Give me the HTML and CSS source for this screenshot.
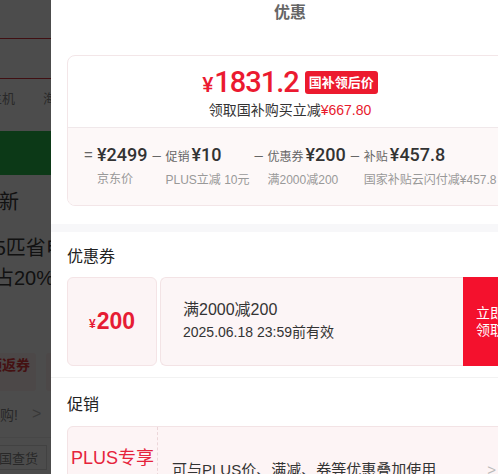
FILE: index.html
```html
<!DOCTYPE html>
<html lang="zh-CN">

<head>
    <meta charset="UTF-8">
    <meta name="viewport" content="width=device-width, initial-scale=1.0">
    <title>优惠</title>
    <link rel="stylesheet" href="styles.css">
</head>

<body>
    <!-- product page behind the sheet -->
    <div class="page">
        <div class="page-top"></div>
        <div class="page-search"></div>
        <div class="page-tabs">
            <span class="tab tab-cut">主机</span>
            <span class="tab">海</span>
        </div>
        <div class="page-banner"></div>
        <div class="page-title"><span class="cut-new">以旧换新</span></div>
        <div class="page-name">
            <div class="name-line cut-a">1.5匹省电</div>
            <div class="name-line cut-b">新能效占20%</div>
        </div>
        <div class="page-tags">
            <span class="tag tag-cut">领返券</span>
            <span class="tag">满</span>
        </div>
        <div class="page-row">
            <span class="row-text">抢购!</span>
            <span class="row-arrow">&gt;</span>
        </div>
        <div class="page-stock"><span class="stock-box">全国查货</span></div>
    </div>

    <div class="mask"></div>

    <!-- discount sheet -->
    <div class="sheet">
        <div class="sheet-title">优惠</div>

        <div class="price-card">
            <div class="price-main">
                <div class="price-line">
                    <span class="price-num"><span class="yen">¥</span>1831.2</span>
                    <span class="price-badge">国补领后价</span>
                </div>
                <div class="price-desc">领取国补购买立减<span class="red">¥667.80</span></div>
            </div>
            <div class="price-calc">
                <div class="calc-item">
                    <span class="op">=</span>
                    <div class="calc-block">
                        <div class="calc-top"><b>¥2499</b></div>
                        <div class="calc-sub">京东价</div>
                    </div>
                </div>
                <div class="calc-item">
                    <span class="op">–</span>
                    <div class="calc-block">
                        <div class="calc-top"><i>促销</i><b>¥10</b></div>
                        <div class="calc-sub">PLUS立减 10元</div>
                    </div>
                </div>
                <div class="calc-item">
                    <span class="op">–</span>
                    <div class="calc-block">
                        <div class="calc-top"><i>优惠券</i><b>¥200</b></div>
                        <div class="calc-sub">满2000减200</div>
                    </div>
                </div>
                <div class="calc-item">
                    <span class="op">–</span>
                    <div class="calc-block">
                        <div class="calc-top"><i>补贴</i><b>¥457.8</b></div>
                        <div class="calc-sub">国家补贴云闪付减¥457.8</div>
                    </div>
                </div>
            </div>
        </div>

        <div class="band"></div>

        <div class="section">
            <h3 class="section-title">优惠券</h3>
            <div class="coupon">
                <div class="coupon-left"><span class="yen-s">¥</span>200</div>
                <div class="coupon-body">
                    <div class="coupon-name">满2000减200</div>
                    <div class="coupon-date">2025.06.18 23:59前有效</div>
                </div>
                <div class="coupon-btn">立即领取</div>
            </div>
        </div>

        <div class="section section-line">
            <h3 class="section-title">促销</h3>
            <div class="promo">
                <div class="promo-left">PLUS专享</div>
                <div class="promo-body">
                    <span>可与PLUS价、满减、券等优惠叠加使用</span>
                    <span class="promo-arrow">&gt;</span>
                </div>
            </div>
        </div>
    </div>
</body>

</html>
```

FILE: styles.css
```css
html,
body {
    margin: 0;
    height: 100%;
    overflow: hidden;
}

body {
    font-family: 'Liberation Sans', 'Noto Sans CJK SC', sans-serif;
    color: #333;
    background-color: #fff;
    position: relative;
}

/* ---- page behind ---- */
.page {
    width: 100%;
    overflow: hidden;
}

.page-top {
    height: 38px;
    border-bottom: 1px solid #d8333f;
}

.page-search {
    height: 39px;
    border-bottom: 1px solid #d8333f;
}

.page-tabs {
    height: 52px;
    display: flex;
    align-items: flex-start;
    box-sizing: border-box;
    font-size: 13px;
    line-height: 40px;
    color: #8a8a8a;
    white-space: nowrap;
}

.tab-cut {
    margin-left: -11px;
    margin-right: 28px;
}

.page-banner {
    height: 44px;
    background-color: #28c04d;
}

.page-title {
    height: 50px;
    display: flex;
    align-items: center;
    font-size: 20px;
    color: #3a3a3a;
    white-space: nowrap;
}

.cut-new {
    margin-left: -61px;
}

.page-name {
    font-size: 20px;
    line-height: 30px;
    color: #3a3a3a;
    white-space: nowrap;
    padding-top: 8px;
    height: 120px;
}

.cut-a {
    margin-left: -22px;
}

.cut-b {
    margin-left: -66px;
}

.page-tags {
    display: flex;
    gap: 10px;
    white-space: nowrap;
    height: 38px;
}

.tag {
    background-color: #fff0f0;
    color: #e4393c;
    font-size: 14px;
    font-weight: bold;
    line-height: 24px;
    padding: 0 6px;
    border-radius: 3px;
}

.tag-cut {
    margin-left: -18px;
}

.page-row {
    display: flex;
    align-items: center;
    height: 46px;
    font-size: 14px;
    color: #888;
    border-bottom: 1px solid #eee;
    white-space: nowrap;
}

.row-text {
    margin-left: -14px;
    margin-right: 14px;
}

.row-arrow {
    color: #bbb;
    font-size: 16px;
}

.page-stock {
    padding-top: 7px;
    font-size: 13px;
    color: #888;
    white-space: nowrap;
}

.stock-box {
    display: inline-block;
    margin-left: -23px;
    border: 1px solid #ddd;
    padding: 2px 8px;
}

.mask {
    position: absolute;
    inset: 0;
    background-color: rgba(0, 0, 0, 0.7);
}

/* ---- sheet ---- */
.sheet {
    position: absolute;
    top: 0;
    bottom: 0;
    left: 51px;
    width: 478px;
    background-color: #fff;
}

.sheet-title {
    text-align: center;
    font-size: 16px;
    font-weight: bold;
    color: #666;
    line-height: 26px;
    height: 55px;
}

.price-card {
    margin: 0 16px 18px 16px;
    border: 1px solid #f3e6e8;
    border-radius: 8px;
    overflow: hidden;
}

.price-main {
    padding: 9px 0 6px;
    text-align: center;
}

.price-line {
    display: flex;
    justify-content: center;
    align-items: center;
    height: 34px;
}

.price-num {
    font-family: 'Roboto', 'Liberation Sans', sans-serif;
    color: #eb1a30;
    font-size: 29px;
    font-weight: 500;
    letter-spacing: -1px;
}

.yen {
    font-size: 21px;
    margin-right: 2px;
}

.price-badge {
    margin-left: 6px;
    background-color: #ec1a2e;
    color: #fff;
    font-size: 13px;
    font-weight: bold;
    line-height: 23px;
    padding: 0 4px;
    border-radius: 3px;
}

.price-desc {
    font-size: 14px;
    line-height: 22px;
    color: #333;
}

.red {
    color: #e8192d;
}

.price-calc {
    display: flex;
    gap: 5px;
    border-top: 1px solid #f0e8ea;
    background-color: #fdf8f8;
    padding: 16px 0 13px 16px;
    white-space: nowrap;
}

.calc-item {
    display: flex;
    align-items: flex-start;
}

.op {
    font-size: 15px;
    color: #666;
    line-height: 22px;
    width: 8px;
    margin-right: 5px;
    text-align: center;
}

.calc-top {
    line-height: 22px;
}

.calc-top i {
    font-style: normal;
    font-size: 12px;
    color: #666;
    margin-right: 2px;
}

.calc-top b {
    font-family: 'Roboto', 'Liberation Sans', sans-serif;
    font-size: 18px;
    font-weight: 500;
    color: #333;
}

.calc-sub {
    font-size: 12px;
    color: #999;
    line-height: 24px;
}

.band {
    height: 8px;
    background-color: #f7f7f9;
}

.section {
    padding: 14px 0 11px 16px;
}

.section-line {
    border-top: 1px solid #f2f2f2;
    padding-top: 16px;
}

.section-title {
    margin: 0 0 9px;
    font-size: 16px;
    font-weight: normal;
    line-height: 22px;
    color: #222;
}

.section-line .section-title {
    margin-bottom: 10px;
}

.coupon {
    display: flex;
    height: 89px;
    gap: 3px;
}

.coupon-left {
    width: 90px;
    display: flex;
    justify-content: center;
    align-items: center;
    background-color: #fcf4f5;
    border: 1px solid #f4e4e6;
    border-radius: 6px;
    box-sizing: border-box;
    color: #e61c34;
    font-size: 23px;
    font-weight: bold;
}

.yen-s {
    font-size: 12px;
    margin-top: 4px;
    margin-right: 1px;
}

.coupon-body {
    width: 303px;
    box-sizing: border-box;
    background-color: #fcf5f6;
    border: 1px solid #f3e3e5;
    border-right: none;
    border-radius: 6px 0 0 6px;
    padding: 21px 0 0 22px;
}

.coupon-name {
    font-size: 16px;
    line-height: 22px;
}

.coupon-date {
    font-size: 14px;
    line-height: 22px;
}

.coupon-btn {
    margin-left: -3px;
    width: 56px;
    padding: 0 13px;
    box-sizing: border-box;
    display: flex;
    align-items: center;
    background-color: #f4112d;
    color: #fff;
    font-size: 14px;
    line-height: 17px;
}

.promo {
    display: flex;
    height: 100px;
    border: 1px solid #f3e3e5;
    border-radius: 6px;
    background-color: #fdf4f5;
}

.promo-left {
    width: 89px;
    border-right: 1px dashed #ecd6d9;
    text-align: center;
    padding-top: 20px;
    color: #e6233b;
    font-size: 18px;
    line-height: 22px;
    white-space: nowrap;
}

.promo-body {
    flex: 1;
    display: flex;
    justify-content: space-between;
    padding: 32px 14px 0 14px;
    font-size: 15px;
    line-height: 22px;
    color: #333;
    white-space: nowrap;
}

.promo-arrow {
    color: #bbb;
    margin-right: 18px;
}
```
